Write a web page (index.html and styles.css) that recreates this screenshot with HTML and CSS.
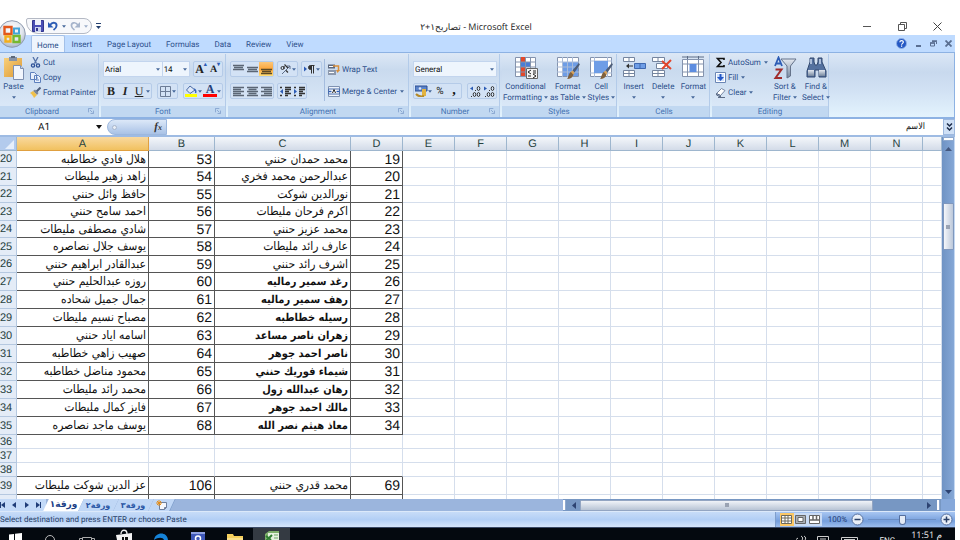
FILE: index.html
```html
<!DOCTYPE html>
<html lang="en">
<head>
<meta charset="utf-8">
<title>Microsoft Excel</title>
<link rel="stylesheet" href="styles.css">
</head>
<body>
<svg class="defs" aria-hidden="true">
  <defs>
    <linearGradient id="steel" x1="0" y1="0" x2="0" y2="1"><stop offset="0" stop-color="#e4e9f1"/><stop offset="1" stop-color="#75879f"/></linearGradient>
    <linearGradient id="gold" x1="0" y1="0" x2="1" y2="1"><stop offset="0" stop-color="#f8cf7a"/><stop offset="1" stop-color="#dd9a35"/></linearGradient>
    <radialGradient id="orb" cx=".5" cy=".35" r=".65"><stop offset="0" stop-color="#ffffff"/><stop offset=".6" stop-color="#e3e7ee"/><stop offset="1" stop-color="#a9b4c6"/></radialGradient>
  </defs>
  <symbol id="caret" viewBox="0 0 5 3"><path d="M0 0h5L2.500 3z" fill="#47689b"/></symbol>
  <symbol id="launch" viewBox="0 0 7 7"><path d="M.5 5V.5H5" fill="none" stroke="#7f9fcb"/><path d="M2.500 2.500 5 5M6.500 3v3.500H3" fill="none" stroke="#7f9fcb"/></symbol>
  <symbol id="al" viewBox="0 0 11 11"><path d="M0 1.500h11M0 3.500h8M0 5.500h11M0 7.500h8M0 9.500h11" stroke="#5b6675" stroke-width="1.300"/></symbol>
  <symbol id="ac" viewBox="0 0 11 11"><path d="M0 1.500h11M1.500 3.500h8M0 5.500h11M1.500 7.500h8M0 9.500h11" stroke="#5b6675" stroke-width="1.300"/></symbol>
  <symbol id="ar" viewBox="0 0 11 11"><path d="M0 1.500h11M3 3.500h8M0 5.500h11M3 7.500h8M0 9.500h11" stroke="#5b6675" stroke-width="1.300"/></symbol>
  <symbol id="vt" viewBox="0 0 11 11"><path d="M0 1.500h11M1 3.500h9M0 5.500h11" stroke="#5b6675" stroke-width="1.500"/></symbol>
  <symbol id="vm" viewBox="0 0 11 11"><path d="M0 3.500h11M1 5.500h9M0 7.500h11" stroke="#5b6675" stroke-width="1.500"/></symbol>
  <symbol id="vb" viewBox="0 0 11 11"><path d="M0 5.500h11M1 7.500h9M0 9.500h11" stroke="#5c4a26" stroke-width="1.500"/></symbol>
  <symbol id="brush" viewBox="0 0 12 15"><path d="M11 0 12 1.500 7 9 5 7z" fill="#4d5d78"/><path d="M5 7l2 2-1 2-3-2z" fill="#d9a35a"/><path d="M3.500 8.500 6 11c-1 3-3 4-6 4 1.500-1.500 1-4.500 3.500-6.500z" fill="#80613d"/></symbol>
</svg>

<div class="app">
  <header class="titlebar">
    <button class="orb" aria-label="Office Button">
      <svg viewBox="0 0 28 28" width="28" height="28"><circle cx="14" cy="14" r="13.300" fill="url(#orb)" stroke="#8f9bb0"/><g fill="none" stroke-width="2.400"><path d="M6.500 7h7v7h-7z" stroke="#e3571b"/><path d="M16 8.500h5v5h-5z" stroke="#43a4d8" stroke-width="2"/><path d="M7.500 16.500h5v5h-5z" stroke="#f3ae1c"/><path d="M15.500 16h6v6h-6z" stroke="#76b82f"/></g></svg>
    </button>
    <div class="qat">
      <button aria-label="Save"><svg viewBox="0 0 12 12" width="12" height="12"><path d="M.5.5h11v11h-11z" fill="#4b4fb5" stroke="#34388e"/><path d="M3 0h6v5H3z" fill="#eef1fb"/><path d="M3 7h6v5H3z" fill="#cdd5ef"/><path d="M4 8h2v3H4z" fill="#34388e"/></svg></button>
      <button aria-label="Undo"><svg viewBox="0 0 10 10" width="10" height="10"><path d="M2 4C5 0 9 2 8.500 5 8.300 7 7 8 5.500 9" fill="none" stroke="#2d5cb5" stroke-width="1.900"/><path d="M0 1v5.500h5.500z" fill="#2d5cb5"/></svg></button>
      <svg class="caret" width="4" height="3"><use href="#caret"/></svg>
      <button aria-label="Redo"><svg viewBox="0 0 10 10" width="10" height="10"><path d="M8 4C5 0 1 2 1.500 5 1.700 7 3 8 4.500 9" fill="none" stroke="#a6b4cb" stroke-width="1.700"/><path d="M10 1v5.500H4.500z" fill="#a6b4cb"/></svg></button>
      <svg class="caret dim" width="4" height="3"><use href="#caret"/></svg>
    </div>
    <button class="qat-more" aria-label="Customize"><svg viewBox="0 0 5 6" width="5" height="6"><path d="M0 .5h5" stroke="#24406f"/><path d="M0 3h5L2.500 6z" fill="#24406f"/></svg></button>
    <h1><bdi dir="rtl">تصاريح١+٢</bdi> - Microsoft Excel</h1>
    <div class="winbtns">
      <button aria-label="Minimize"><svg viewBox="0 0 9 9" width="9" height="9"><path d="M0 4.500h8" stroke="#555"/></svg></button>
      <button aria-label="Restore"><svg viewBox="0 0 9 9" width="9" height="9"><path d="M.5 2.500h6v6h-6zM2.500 2V.5h6v6H7" fill="none" stroke="#555"/></svg></button>
      <button aria-label="Close"><svg viewBox="0 0 9 9" width="9" height="9"><path d="M.5.5l8 8M8.500.5l-8 8" stroke="#444"/></svg></button>
    </div>
  </header>

  <nav class="tabs">
    <a class="on" href="#">Home</a><a href="#">Insert</a><a href="#">Page Layout</a><a href="#">Formulas</a><a href="#">Data</a><a href="#">Review</a><a href="#">View</a>
    <div class="docbtns">
      <button aria-label="Help"><svg viewBox="0 0 11 11" width="11" height="11"><circle cx="5.500" cy="5.500" r="5" fill="#2458c4" stroke="#8fb0e6"/><path d="M3.800 4.200c.2-2 3.600-2 3.500 0 0 1.200-1.700 1.200-1.700 2.600M5.600 7.600v1.200" fill="none" stroke="#fff" stroke-width="1.200"/></svg></button>
      <button aria-label="Minimize workbook"><svg viewBox="0 0 7 7" width="7" height="7"><path d="M1 6h5" stroke="#5a6f92" stroke-width="2"/></svg></button>
      <button aria-label="Restore workbook"><svg viewBox="0 0 7 7" width="7" height="7"><path d="M.5 3h4v3h-4zM2 1.500h4.500V4" fill="none" stroke="#5a6f92"/><path d="M0 3h5M2 1h5" stroke="#5a6f92" stroke-width="1.500"/></svg></button>
      <button aria-label="Close workbook"><svg viewBox="0 0 7 7" width="7" height="7"><path d="M.5.5l6 6M6.500.5l-6 6" stroke="#5a6f92" stroke-width="1.800"/></svg></button>
    </div>
  </nav>

  <section class="ribbon">
    <fieldset class="group g-clip">
      <div class="body">
        <button class="big paste"><svg viewBox="0 0 20 24" width="20" height="24"><path d="M0 2h18v19H0z" fill="url(#gold)"/><path d="M5 1h8v4H5z" fill="#8793a6"/><path d="M7 0h4v2H7z" fill="#5d6879"/><path d="M9.500 9.500h7l3 3v11h-10z" fill="#f2f6fd" stroke="#7d8fb0"/><path d="M16.500 9.500v3h3" fill="#c5d3ea" stroke="#7d8fb0"/></svg><span>Paste<br><svg class="caret" width="4" height="3"><use href="#caret"/></svg></span></button>
        <div class="stack">
          <button><svg viewBox="0 0 11 11" width="11" height="11"><path d="M3 0l3.500 6.500M8 0L4.500 6.500" stroke="#5472a8" stroke-width="1.300"/><circle cx="3" cy="8.500" r="1.600" fill="none" stroke="#2b4f96" stroke-width="1.300"/><circle cx="8" cy="8.500" r="1.600" fill="none" stroke="#2b4f96" stroke-width="1.300"/></svg>Cut</button>
          <button><svg viewBox="0 0 11 11" width="11" height="11"><path d="M.5.500h4l2 2v5h-6zM4.500 3.500h4l2 2v5h-6z" fill="#e8f0fc" stroke="#5d80bd"/><path d="M6 6h2M6 8h3" stroke="#5d80bd"/></svg>Copy</button>
          <button><svg viewBox="0 0 11 11" width="11" height="11"><path d="M10.500.5 6 5" stroke="#4e5f7d" stroke-width="2"/><path d="M5 2.500 8.500 6 7 8 3 4z" fill="#7b8699"/><path d="M3 4l4 4-3 3C3 8.500 1.500 7 0 6z" fill="#f0c04a"/></svg>Format Painter</button>
        </div>
      </div>
      <legend>Clipboard</legend><svg class="launch" width="6" height="6"><use href="#launch"/></svg>
    </fieldset>

    <fieldset class="group g-font">
      <div class="body rows">
        <div class="row">
          <label class="combo c-font"><select aria-label="Font"><option>Arial</option></select><svg class="caret" width="4" height="3"><use href="#caret"/></svg></label>
          <label class="combo c-size"><select aria-label="Font size"><option>14</option></select><svg class="caret" width="4" height="3"><use href="#caret"/></svg></label>
          <div class="set push"><button class="serif grow" aria-label="Grow font">A<sup>▴</sup></button><button class="serif shrink" aria-label="Shrink font">A<sup>▾</sup></button></div>
        </div>
        <div class="row">
          <div class="set"><button class="serif">B</button><button class="serif i">I</button><button class="serif u">U</button><svg class="caret" width="4" height="3"><use href="#caret"/></svg></div>
          <div class="set"><button aria-label="Borders"><svg viewBox="0 0 11 11" width="11" height="11"><path d="M.5.5h10v10H.5zM5.500 0v11M0 5.500h11" fill="none" stroke="#6c7c96"/></svg></button><svg class="caret" width="4" height="3"><use href="#caret"/></svg></div>
          <div class="set"><button aria-label="Fill color"><svg viewBox="0 0 12 12" width="12" height="12"><path d="M5 1l5 4-5 3.500L1.500 5z" fill="#dfe9f8" stroke="#4a6ba6"/><path d="M9 4c2 1 2 3 1.500 4" stroke="#3b68b8" stroke-width="1.500" fill="none"/><path d="M0 9h12v3H0z" fill="#ff0"/></svg></button><svg class="caret" width="4" height="3"><use href="#caret"/></svg><button class="serif ink" aria-label="Font color">A</button><svg class="caret" width="4" height="3"><use href="#caret"/></svg></div>
        </div>
      </div>
      <legend>Font</legend><svg class="launch" width="6" height="6"><use href="#launch"/></svg>
    </fieldset>

    <fieldset class="group g-align">
      <div class="body">
        <div class="rows">
          <div class="row">
            <div class="set"><button aria-label="Top align"><svg width="11" height="11"><use href="#vt"/></svg></button><button aria-label="Middle align"><svg width="11" height="11"><use href="#vm"/></svg></button><button class="lit" aria-label="Bottom align"><svg width="11" height="11"><use href="#vb"/></svg></button></div>
            <div class="set"><button aria-label="Orientation"><svg viewBox="0 0 11 11" width="11" height="11"><path d="M2 10l8-8M10 5V2H7" fill="none" stroke="#5e6f8a"/><circle cx="2.500" cy="4" r="1.500" fill="none" stroke="#333"/><path d="M4 2v3M4.500.500 8 4M6 6.500l2 2" stroke="#333" stroke-width="1.200"/></svg></button><svg class="caret" width="4" height="3"><use href="#caret"/></svg></div>
            <div class="set"><button aria-label="Text direction"><svg viewBox="0 0 11 11" width="11" height="11"><path d="M0 2.500v5L3 5z" fill="#2d5cb5"/><path d="M10.500 1.500H6.500a2 2 0 0 0 0 4V2M7.500 1.500v8M9.500 1.500v8" fill="#333" stroke="#333"/></svg></button><svg class="caret" width="4" height="3"><use href="#caret"/></svg></div>
          </div>
          <div class="row">
            <div class="set"><button aria-label="Align left"><svg width="11" height="11"><use href="#al"/></svg></button><button aria-label="Center"><svg width="11" height="11"><use href="#ac"/></svg></button><button aria-label="Align right"><svg width="11" height="11"><use href="#ar"/></svg></button></div>
            <div class="set"><button aria-label="Decrease indent"><svg viewBox="0 0 11 11" width="11" height="11"><path d="M0 1.500h2M5 1.500h6M5 3.500h6M5 5.500h4M5 7.500h6M0 9.500h2M5 9.500h3" stroke="#333" stroke-width="1.300"/><path d="M0 5.500 3 3v5z" fill="#2d5cb5"/></svg></button><button aria-label="Increase indent"><svg viewBox="0 0 11 11" width="11" height="11"><path d="M0 1.500h2M5 1.500h6M5 3.500h6M5 5.500h4M5 7.500h6M0 9.500h2M5 9.500h3" stroke="#333" stroke-width="1.300"/><path d="M3 5.500 0 3v5z" fill="#2d5cb5"/></svg></button></div>
          </div>
        </div>
        <div class="wraps">
          <button><svg viewBox="0 0 12 11" width="12" height="11"><path d="M0 .5h7v4H0z" fill="#5c6980"/><path d="M0 6h8v5H0z" fill="#8d99ad"/><path d="M5 2h5.500v5" fill="none" stroke="#d98f3a" stroke-width="1.500"/><path d="M1 2.500h4M1 8.500h5" stroke="#fff"/><path d="M8 6h4L9.500 9z" fill="#d98f3a"/></svg>Wrap Text</button>
          <button><svg viewBox="0 0 12 11" width="12" height="11"><path d="M.5.5h11v10H.5z" fill="#eef3fb" stroke="#7f92b2"/><path d="M.5 3h11v5H.5z" fill="#fff" stroke="#4b6fae"/><path d="M1 5.500h2.500M8.500 5.500H11" stroke="#2d5cb5" stroke-width="1.500"/><path d="M4.500 7 6 3.500 7.500 7" fill="none" stroke="#222"/></svg>Merge &amp; Center<svg class="caret" width="4" height="3"><use href="#caret"/></svg></button>
        </div>
      </div>
      <legend>Alignment</legend><svg class="launch" width="6" height="6"><use href="#launch"/></svg>
    </fieldset>

    <fieldset class="group g-num">
      <div class="body rows">
        <div class="row"><label class="combo c-num"><select aria-label="Number format"><option>General</option></select><svg class="caret" width="4" height="3"><use href="#caret"/></svg></label></div>
        <div class="row">
          <div class="set"><button aria-label="Accounting format"><svg viewBox="0 0 13 12" width="13" height="12"><path d="M0 1h12v5H0z" fill="#5b83c9" stroke="#2c4f92"/><circle cx="5" cy="3.500" r="1.300" fill="#dfe9fa"/><path d="M7 4h4v7H7z" fill="#e2b340"/><path d="M1 9c2 2 5 3 8 2" stroke="#b48a2a" stroke-width="2" fill="none"/></svg></button><svg class="caret" width="4" height="3"><use href="#caret"/></svg><button class="pct">%</button><button class="comma">,</button></div>
          <div class="set dec"><button aria-label="Increase decimal"><svg viewBox="0 0 11 11" width="11" height="11"><path d="M0 2.500 3 .5v4z" fill="#2d5cb5"/><g fill="none" stroke="#333"><ellipse cx="8.500" cy="2.500" rx="1.300" ry="2"/><ellipse cx="4.500" cy="8.500" rx="1.300" ry="2"/><ellipse cx="8.500" cy="8.500" rx="1.300" ry="2"/><path d="M1 10.500h1M5 4.500h1"/></g></svg></button><button aria-label="Decrease decimal"><svg viewBox="0 0 11 11" width="11" height="11"><path d="M3 2.500 0 .5v4z" fill="#2d5cb5"/><g fill="none" stroke="#333"><ellipse cx="8.500" cy="2.500" rx="1.300" ry="2"/><ellipse cx="4.500" cy="8.500" rx="1.300" ry="2"/><ellipse cx="8.500" cy="8.500" rx="1.300" ry="2"/><path d="M1 10.500h1M5 4.500h1"/></g></svg></button></div>
        </div>
      </div>
      <legend>Number</legend><svg class="launch" width="6" height="6"><use href="#launch"/></svg>
    </fieldset>

    <fieldset class="group g-styles">
      <div class="body bigs">
        <button class="big"><svg viewBox="0 0 24 24" width="24" height="24"><path d="M1.500 1.500h20v19h-20z" fill="#fff" stroke="#8493ad"/><path d="M6.500 1h5v5h-5zM6.500 11h5v5h-5z" fill="#e2492b"/><path d="M6.500 6h10v5h-10z" fill="#4a7ed6"/><path d="M6.500 16h5v4h-5z" fill="#e2492b"/><path d="M6.500 1v20M11.500 1v20M16.500 1v20M1 6h21M1 11h21M1 16h21" stroke="#8493ad" fill="none"/><path d="M12.500 12.500h11v10h-11z" fill="#f4f4f4" stroke="#666"/><path d="M17 14l-3 2 3 2M19 15h3M19 17h3M14 20h3M19 18l3 2-3 2" fill="none" stroke="#222"/></svg><span>Conditional<br>Formatting <svg class="caret" width="4" height="3"><use href="#caret"/></svg></span></button>
        <button class="big"><svg viewBox="0 0 24 24" width="24" height="24"><path d="M1.500 1.500h21v19h-21z" fill="#fff" stroke="#8493ad"/><path d="M7 6h15v14H7z" fill="#6e9de6"/><path d="M6.500 1v20M11.500 1v20M16.500 1v20M1 6h22M1 11h22M1 16h22" stroke="#a9bbd8" fill="none"/><use href="#brush" x="11" y="7" width="13" height="16"/></svg><span>Format<br>as Table <svg class="caret" width="4" height="3"><use href="#caret"/></svg></span></button>
        <button class="big"><svg viewBox="0 0 24 24" width="24" height="24"><path d="M1.500 1.500h21v19h-21z" fill="#fff" stroke="#8493ad"/><path d="M5.500 1v20M18.500 1v20M1 5h22M1 17h22" stroke="#a9bbd8" fill="none"/><path d="M5 5h14v12H5z" fill="#6e9de6"/><use href="#brush" x="11" y="7" width="13" height="16"/></svg><span>Cell<br>Styles <svg class="caret" width="4" height="3"><use href="#caret"/></svg></span></button>
      </div>
      <legend>Styles</legend>
    </fieldset>

    <fieldset class="group g-cells">
      <div class="body bigs">
        <button class="big"><svg viewBox="0 0 24 24" width="24" height="24"><path d="M1.500 1.500h11v4h-11zM1.500 14.500h11v6h-11zM7 1.500v4M7 14.500v6M1.500 17.500h11" fill="#fff" stroke="#75859f"/><path d="M12.500 7.500h11v5h-11z" fill="#6e9de6" stroke="#3f68b0"/><path d="M18 7.500v5" stroke="#3f68b0"/><path d="M11 10H5" stroke="#333"/><path d="M4 10l3-2.500v5z" fill="#333"/></svg><span>Insert<br><svg class="caret" width="4" height="3"><use href="#caret"/></svg></span></button>
        <button class="big"><svg viewBox="0 0 24 24" width="24" height="24"><path d="M1.500 1.500h12v4h-12zM5.500 7.500h11v5h-11zM1.500 14.500h12v6h-12zM7 1.500v4M7 14.500v6M1.500 17.500h12" fill="#fff" stroke="#75859f"/><path d="M11 5l9 8M20 4l-9 9" stroke="#e2452b" stroke-width="2"/></svg><span>Delete<br><svg class="caret" width="4" height="3"><use href="#caret"/></svg></span></button>
        <button class="big"><svg viewBox="0 0 24 24" width="24" height="24"><path d="M1.500 3.500h21v17h-21zM1.500 8h21M1.500 16h21M6.500 3.500v17M17.500 3.500v17" fill="#fff" stroke="#8493ad"/><path d="M8.500 8h7v8h-7z" fill="#5d8de0"/><path d="M1 1h22M6.500 0v3M17.500 0v3" stroke="#5c6c86"/></svg><span>Format<br><svg class="caret" width="4" height="3"><use href="#caret"/></svg></span></button>
      </div>
      <legend>Cells</legend>
    </fieldset>

    <fieldset class="group g-edit">
      <div class="body">
        <div class="stack">
          <button><svg viewBox="0 0 11 11" width="11" height="11"><path d="M9 3V1.500H2.500L6 5.500l-3.500 4H9V8" fill="none" stroke="#111" stroke-width="1.600"/></svg>AutoSum<svg class="caret" width="4" height="3"><use href="#caret"/></svg></button>
          <button><svg viewBox="0 0 11 11" width="11" height="11"><path d="M.5.5h10v10H.5z" fill="#fff" stroke="#6b86b5"/><path d="M2 2h7v7H2z" fill="#cfe0fb"/><path d="M4.500 2h2v3H9L5.500 9 2 5h2.500z" fill="#2558c6"/></svg>Fill<svg class="caret" width="4" height="3"><use href="#caret"/></svg></button>
          <button><svg viewBox="0 0 11 11" width="11" height="11"><path d="M6.500 1.500 10 3.500 5.500 8.500 1.500 6.500z" fill="#fff" stroke="#7787a3"/><path d="M1.500 6.500 5.500 8.500v1.500l-4-2zM3 10.500h7" fill="#a9b8d3" stroke="#5c6c86"/></svg>Clear<svg class="caret" width="4" height="3"><use href="#caret"/></svg></button>
        </div>
        <button class="big"><svg viewBox="0 0 24 24" width="24" height="24"><path d="M2 10 5.500 1.500 9 10M3.500 7.500h4" fill="none" stroke="#2d5cb5" stroke-width="1.800"/><path d="M2.500 13.500h6l-6 8.500H9" fill="none" stroke="#a02c2c" stroke-width="2"/><path d="M8 3h15l-5.500 7v10L14 22V10z" fill="url(#steel)" stroke="#65738a"/></svg><span>Sort &amp;<br>Filter <svg class="caret" width="4" height="3"><use href="#caret"/></svg></span></button>
        <button class="big"><svg viewBox="0 0 24 24" width="24" height="24"><path d="M6 2h4v4l1 3h2l1-3V2h4v4l4 9v6h-7v-7h-4v7H3v-6l3-9z" fill="#54719f" stroke="#32496f"/><path d="M4 14h6v6H4zM15 14h6v6h-6z" fill="url(#steel)"/><path d="M7 3v5M16 3v5" stroke="#c9d7ee" stroke-width="1.500"/></svg><span>Find &amp;<br>Select <svg class="caret" width="4" height="3"><use href="#caret"/></svg></span></button>
      </div>
      <legend>Editing</legend>
    </fieldset>
  </section>

  <section class="formula">
    <label class="namebox"><input aria-label="Name box" value="A1"><svg viewBox="0 0 6 4" width="6" height="4"><path d="M0 0h6L3 4z" fill="#111"/></svg></label>
    <div class="fx"><i class="dot"></i><button aria-label="Insert function"><i>f</i><small>x</small></button></div>
    <input class="fbox" aria-label="Formula" dir="rtl" value="الاسم">
    <button class="expand" aria-label="Expand formula bar"><svg viewBox="0 0 7 8" width="7" height="8"><path d="M1 .5 3.500 3 6 .5M1 4.500 3.500 7 6 4.500" fill="none" stroke="#1d2c4a" stroke-width="1.500"/></svg></button>
  </section>

  <main class="sheet">
    <div class="gridwrap">
      <table>
        <colgroup><col class="w-n"><col class="w-a"><col class="w-b"><col class="w-c"><col class="w-d"><col class="w-d" span="10"><col></colgroup>
        <thead><tr id="heads"></tr></thead>
        <tbody id="rows"></tbody>
      </table>
    </div>
    <div class="vscroll"><i class="split"></i><svg viewBox="0 0 7 4" width="7" height="4"><path d="M0 4h7L3.500 0z" fill="#44587f"/></svg><i class="thumb"></i><svg viewBox="0 0 7 4" width="7" height="4"><path d="M0 0h7L3.500 4z" fill="#2d4371"/></svg></div>
  </main>

  <div class="sheetbar">
    <div class="nav">
      <button aria-label="First sheet"><svg viewBox="0 0 5 6" width="5" height="6"><path d="M.5 0v6" stroke="#1f3d78"/><path d="M5 0v6L1 3z" fill="#1f3d78"/></svg></button>
      <button aria-label="Previous sheet"><svg viewBox="0 0 5 6" width="5" height="6"><path d="M4 0v6L0 3z" fill="#1f3d78"/></svg></button>
      <button aria-label="Next sheet"><svg viewBox="0 0 5 6" width="5" height="6"><path d="M1 0v6l4-3z" fill="#1f3d78"/></svg></button>
      <button aria-label="Last sheet"><svg viewBox="0 0 5 6" width="5" height="6"><path d="M4.500 0v6" stroke="#1f3d78"/><path d="M0 0v6l4-3z" fill="#1f3d78"/></svg></button>
    </div>
    <a class="stab on" href="#" dir="rtl"><span>ورقة١</span></a><a class="stab" href="#" dir="rtl"><span>ورقة٢</span></a><a class="stab" href="#" dir="rtl"><span>ورقة٣</span></a>
    <button class="stab new" aria-label="Insert worksheet"><svg viewBox="0 0 12 10" width="12" height="10"><path d="M3.500 2.500h7v5l-2 2h-5z" fill="#f5f8fd" stroke="#6e7f9d"/><path d="M10.500 7.500h-2v2" fill="none" stroke="#6e7f9d"/><path d="M3 0v6M0 3h6M1 1l4 4M5 1 1 5" stroke="#e58f1c"/></svg></button>
    <div class="hscroll"><i class="split"></i><svg viewBox="0 0 4 7" width="4" height="7"><path d="M4 0v7L0 3.500z" fill="#2d4371"/></svg><i class="thumb"></i><svg viewBox="0 0 4 7" width="4" height="7"><path d="M0 0v7l4-3.500z" fill="#2d4371"/></svg><i class="split"></i></div>
    <i class="nook"></i>
  </div>

  <footer class="status">
    <span class="msg">Select destination and press ENTER or choose Paste</span>
    <div class="tools">
      <div class="views">
        <button class="lit" aria-label="Normal"><svg viewBox="0 0 11 9" width="11" height="9"><path d="M.5.5h10v8H.5zM4 .5v8M7 .5v8M.5 3h10M.5 6h10" fill="#fff" stroke="#6d6a5c"/></svg></button>
        <button aria-label="Page layout"><svg viewBox="0 0 11 9" width="11" height="9"><path d="M.5.5h10v8H.5z" fill="#aab0b8" stroke="#666"/><path d="M3 2.500h5v4H3z" fill="#fff" stroke="#666"/></svg></button>
        <button aria-label="Page break preview"><svg viewBox="0 0 11 9" width="11" height="9"><path d="M.5.5h10v8H.5z" fill="#fff" stroke="#666"/><path d="M1 5h3V1M7.500 1v4H10M4 5h3.500" fill="none" stroke="#666" stroke-width="1.500"/></svg></button>
      </div>
      <button class="pc">100%</button>
      <button aria-label="Zoom out"><svg viewBox="0 0 13 13" width="13" height="13"><circle cx="6.500" cy="6.500" r="5.500" fill="#e9eff8" stroke="#546f9f"/><path d="M3.500 6.500h6" stroke="#2b4068" stroke-width="1.500"/></svg></button>
      <input type="range" aria-label="Zoom" value="50">
      <button aria-label="Zoom in"><svg viewBox="0 0 13 13" width="13" height="13"><circle cx="6.500" cy="6.500" r="5.500" fill="#e9eff8" stroke="#546f9f"/><path d="M3.500 6.500h6M6.500 3.500v6" stroke="#2b4068" stroke-width="1.500"/></svg></button>
    </div>
  </footer>

  <div class="taskbar">
    <div class="apps">
      <button aria-label="Start"><svg viewBox="0 0 16 12" width="16" height="12"><path d="M1 6.500 6 6v6H1zM7 5.800 14 5v7H7z" fill="#fff"/></svg></button>
      <button aria-label="Search"><svg viewBox="0 0 16 12" width="16" height="12"><circle cx="8" cy="12" r="4.500" fill="none" stroke="#bbb"/></svg></button>
      <button aria-label="Task view"><svg viewBox="0 0 16 12" width="16" height="12"><path d="M3.500 12V9.500h9V12M.5 12V10.500H3M15.500 12V10.500H13" fill="none" stroke="#aaa"/></svg></button>
      <button aria-label="Store"><svg viewBox="0 0 16 12" width="16" height="12"><path d="M0 7l16-2v7H1z" fill="#f4f4f4"/><path d="M5 6c0-5 6-5 6 0" fill="none" stroke="#f4f4f4" stroke-width="1.300"/><path d="M6 9h2v3H6zM9 9h3v3H9z" fill="#111"/></svg></button>
      <button aria-label="Edge"><svg viewBox="0 0 16 12" width="16" height="12"><path d="M1 12C2 4 14 3 15 12h-4c-1-3-6-3-10 0z" fill="#1583d8"/></svg></button>
      <button aria-label="Media"><svg viewBox="0 0 16 12" width="16" height="12"><path d="M1 4h14v8H1z" fill="#3e57b8"/><path d="M1 4h14v2H1z" fill="#8ea0e0"/><circle cx="8" cy="10.500" r="2.500" fill="none" stroke="#fff" stroke-width="1.500"/></svg></button>
      <button aria-label="Files"><svg viewBox="0 0 16 12" width="16" height="12"><path d="M0 6h6l1 2h9v4H0z" fill="#f5cf5c"/><path d="M0 10h16v2H0z" fill="#fbe08a"/></svg></button>
      <button class="cur" aria-label="Excel"><svg viewBox="0 0 16 12" width="16" height="12"><path d="M1 6l4-3h10v9H1z" fill="#7fae6c"/><path d="M4 5h11v7H4z" fill="#e6f0e0"/><path d="M2 8l5 4M8 7l-6 6" stroke="#2f7d32" stroke-width="2"/><path d="M10 7h4M10 10h4" stroke="#6aa564"/></svg></button>
    </div>
    <div class="tray">
      <svg viewBox="0 0 100 12" width="100" height="12"><path d="M23 11.500 25 10M28 8c2 1 2 3 1 4M31 8c2 1 2 3 1 4M44.500 12V8.500h11V12M47 11h6M68.500 12V9.500h16V12M71 11.500h11" fill="none" stroke="#ccc"/></svg>
      <span class="lang">ENG</span>
      <span class="clock"><bdi>11:51</bdi> م</span>
    </div>
  </div>
</div>
<script src="script.js"></script>
</body>
</html>
```
FILE: styles.css
```css
* { box-sizing: border-box; }
body {
  margin: 0;
  background: #fff;
  font-family: Roboto, "Open Sans", "DejaVu Sans", sans-serif;
  font-size: 8px;
  line-height: 11px;
  color: #2c4f8c;
  text-rendering: geometricPrecision;
}
button, input, select { font: inherit; color: inherit; text-rendering: inherit; }
button { border: 0; padding: 0; background: none; display: inline-flex; align-items: center; justify-content: center; white-space: nowrap; }
svg { display: block; flex: none; }
a { color: inherit; text-decoration: none; }
.defs { position: absolute; width: 0; height: 0; }
.app { display: flex; flex-direction: column; height: 100vh; margin-right: 5px; overflow: hidden; }

/* Title bar */
.titlebar { position: relative; z-index: 2; display: flex; align-items: center; height: 35px; padding: 17px 13px 0 26px; flex: none; }
.orb { position: absolute; left: -2px; top: 20px; }
.qat { display: flex; align-items: center; gap: 4px; width: 66px; height: 16px; padding-left: 5px; border: 1px solid #b4b9c4; border-radius: 2px 8px 8px 12px; background: #f7f8fb; }
.dim { opacity: .5; }
.qat-more { margin-left: 4px; }
.titlebar h1 { flex: 1; margin: 0; padding-right: 12px; text-align: center; font-family: "Open Sans", "DejaVu Sans", sans-serif; font-size: 9px; font-weight: 400; color: #222; }
.winbtns { display: flex; gap: 26px; }

/* Ribbon tabs */
.tabs { display: flex; align-items: stretch; height: 17px; flex: none; padding: 0 3px 0 31px; background: #bfdbff; }
.tabs > a { display: flex; align-items: center; padding: 2px 8px 0 7px; }
.tabs > a.on { padding: 2px 5px 0; border: 1px solid #a3c0e8; border-bottom: 0; border-radius: 2px 2px 0 0; background: #eef5fe; }
.docbtns { display: flex; align-items: center; gap: 8px; margin-left: auto; }

/* Ribbon */
.ribbon { display: flex; gap: 2px; height: 67px; flex: none; padding: 1px 0 0; border: 1px solid #8db2e3; border-width: 1px 1px 2px 0; background: linear-gradient(#dbe7f6, #c8d9ee 30%, #d2e2f4 60%, #e3f3fd); }
.group { position: relative; display: flex; flex-direction: column; margin: 0; padding: 0; border: 0; border-right: 1px solid #b3cbe9; min-width: 0; background: linear-gradient(#dce7f5, #c9daee 25%, #d9e7f7 80%); }
.group legend { order: 2; float: left; width: 100%; height: 11px; padding: 0; background: #c1d8f1; color: #4573b3; text-align: center; }
.launch { position: absolute; right: 4px; bottom: 3px; }
.body { display: flex; height: 52px; width: 100%; }
.g-clip { width: 99px; }
.g-clip legend { padding-right: 14px; }
.g-font { width: 125px; }
.g-align { width: 181px; }
.g-num { width: 89px; }
.g-styles { width: 115px; }
.g-cells { width: 91px; }
.g-edit { width: 117px; }
.big { flex-direction: column; justify-content: flex-start; gap: 1px; padding-top: 2px; }
.big .caret { display: inline-block; vertical-align: middle; }
.bigs { justify-content: space-around; }
.paste { width: 27px; }
.stack { display: flex; flex-direction: column; align-items: flex-start; padding: 1px 0 0 3px; }
.stack button { height: 15px; gap: 2px; }
.g-edit .body { gap: 5px; }
.rows { display: flex; flex-direction: column; gap: 6px; padding: 7px 2px 0; }
.row { display: flex; gap: 3px; height: 16px; }
.g-font .row, .g-num .row { justify-content: space-between; }
.set { display: flex; align-items: center; border: 1px solid #b5cbe8; border-radius: 2px; background: #d3e2f5; }
.set button { width: 14px; height: 14px; }
.set .caret { margin-right: 1px; }
.push { margin-left: auto; }
.lit { background: linear-gradient(#fbc77a, #fda63a 50%, #ffe07a); }
.combo { display: flex; align-items: center; border: 1px solid #c3d5ee; background: #eef5fd; }
.combo select { flex: 1; min-width: 0; appearance: none; border: 0; padding: 0 1px; background: none; color: #111; }
.combo .caret { margin-right: 2px; }
.c-font { width: 61px; }
.c-size { width: 29px; margin-left: -4px; }
.c-num { width: 86px; }
.serif { font: bold 12px "Liberation Serif", serif; color: #222; }
.serif.i { font-style: italic; }
.serif.u { font-weight: 400; text-decoration: underline; }
.serif sup { font-size: 6px; line-height: 6px; color: #2d5cb5; align-self: flex-start; }
.serif.shrink { font-size: 10px; }
.set .ink { height: 12px; border-bottom: 3px solid #f00; line-height: 9px; color: #24407a; }
.wraps { display: flex; flex-direction: column; gap: 6px; height: 42px; margin-top: 5px; padding: 2px 0 0 3px; border-left: 1px solid #a4bcde; align-items: flex-start; }
.wraps button { height: 16px; gap: 2px; }
.wraps .caret, .stack .caret { margin-left: 1px; }
.pct { font-size: 10px; color: #222; }
.comma { font: bold 14px "Liberation Serif", serif; color: #111; }

/* Formula bar */
.formula { display: flex; height: 18px; flex: none; border-bottom: 2px solid #9ebbe3; background: #fff; color: #111; }
.namebox { display: flex; align-items: center; width: 107px; padding-right: 5px; }
.namebox input { flex: 1; min-width: 0; border: 0; padding: 0 8px 0 0; background: none; text-align: center; font-size: 10px; }
.fx { display: flex; align-items: center; justify-content: space-between; width: 60px; padding: 0 4px; border: 1px solid #9db8de; border-radius: 8px 0 0 8px; background: linear-gradient(#dce8f8, #a9c2e6); }
.dot { width: 5px; height: 5px; border-radius: 50%; background: #e9eef6; border: 1px solid #a8b6cc; }
.fx button { font: bold italic 11px "Liberation Serif", serif; color: #333; }
.fx small { font-size: 8px; }
.fbox { flex: 1; min-width: 0; border: 0; padding: 0 18px 0 0; font: 9px "DejaVu Sans Condensed", "DejaVu Sans", sans-serif; }
.expand { width: 12px; border: 1px solid #9db8de; background: #cfe0f6; }

/* Grid */
.sheet { display: flex; flex: 1; min-height: 0; overflow: hidden; }
.gridwrap { flex: 1; min-width: 0; overflow: hidden; }
table { width: 100%; table-layout: fixed; border-collapse: separate; border-spacing: 0; }
.w-n { width: 17px; }
.w-a { width: 132px; }
.w-b { width: 66px; }
.w-c { width: 136px; }
.w-d { width: 52px; }
th, td { padding: 0; overflow: hidden; white-space: nowrap; border: 0 solid #d5deec; border-width: 0 1px 1px 0; }
th { font: 11px/12px "Liberation Sans", sans-serif; color: #27413e; }
thead th { height: 14px; background: linear-gradient(#f4f7fb, #d3dbe8); border-color: #9eb6ce; }
thead th.sel { background: linear-gradient(#f9d99f, #f1c15f); border-color: #e0a040; }
tbody th { padding-right: 4px; text-align: right; background: #e4ecf7; border-color: #b5c8e0; }
.corner { background: #b3cbed; }
.corner svg { margin: 2px 2px 0 auto; }
td { font: 14px/13px "Liberation Sans", sans-serif; color: #111; text-align: right; }
td.box { border-color: #555; padding-right: 2px; }
td.name { font: 12px/13px "DejaVu Sans Condensed", "DejaVu Sans", sans-serif; padding-right: 2px; }
td.bold { font-size: 11px; font-weight: 700; }
td.under { border-bottom-color: #555; }
.h17 > * { height: 17px; }
.h18 > * { height: 18px; }
.h14 > * { height: 14px; }
.vscroll { display: flex; flex-direction: column; align-items: center; width: 13px; padding: 0 0 5px; border-right: 1px solid #c4d8f2; background: linear-gradient(90deg, #6f93c4, #85a7d6); }
.vscroll .split { width: 11px; height: 4px; margin-bottom: 6px; border: 1px solid #8ea9cf; background: #fff; }
.vscroll .thumb { width: 11px; height: 47px; margin: 52px 0 auto; border: 1px solid #7f97bd; border-radius: 1px; background: linear-gradient(#9aa3b3, #9aa3b3) center / 4px 4px no-repeat, linear-gradient(90deg, #f4f6fa, #bcc8da); }

/* Sheet tabs and horizontal scroll bar */
.sheetbar { display: flex; height: 13px; flex: none; border-bottom: 1px solid #dce9fa; background: #9bb5dd; }
.nav { display: flex; align-items: center; justify-content: space-between; width: 46px; padding: 0 5px 0 0; background: #c3daf8; }
.stab { display: flex; align-items: center; justify-content: center; width: 36px; margin-right: -1px; border-right: 1px solid #7f9ecb; background: #c0d7f6; transform: skewX(-25deg); font: bold 8px/11px "DejaVu Sans", sans-serif; color: #2b57a5; }
.stab > * { transform: skewX(25deg); }
.stab.on { background: #fff; color: #1c3f86; font-size: 9px; }
.stab.new { width: 22px; }
.hscroll { display: flex; align-items: center; width: calc(40% - 4px); margin-left: auto; gap: 4px; padding-right: 1px; background: #7797c3; }
.hscroll .split { width: 3px; height: 10px; background: #fff; border-right: 1px solid #8ea9cf; }
.hscroll .thumb { flex: 1; height: 11px; margin-right: 50px; border: 1px solid #93a5c2; border-radius: 1px; background: linear-gradient(#9aa3b3, #9aa3b3) center / 4px 4px no-repeat, linear-gradient(#f0f3f8, #b8c4d5); }
.hscroll .split + svg { margin-left: 2px; }
.hscroll svg + .split { margin-left: 2px; }
.nook { width: 14px; background: #86a8da; }

/* Status bar */
.status { display: flex; align-items: stretch; height: 15px; flex: none; background: linear-gradient(#c7dcf8, #b3cff5 50%, #d7e6fa); }
.msg { display: flex; align-items: center; flex: 1; color: #2a3f66; }
.tools { display: flex; align-items: center; gap: 4px; padding: 0 2px 0 4px; border-left: 1px solid #7f9ecb; background: linear-gradient(#a8c6f2, #769fdc 60%, #9dbeee); }
.views { display: flex; }
.views button { width: 14px; height: 13px; background: #c9dbf5; }
.views button.lit { background: #fcc866; }
.pc { margin-left: 2px; color: #1f3d78; }
input[type=range] { appearance: none; width: 68px; height: 12px; margin: 0; background: linear-gradient(#6d8fc4, #6d8fc4) center / 100% 1px no-repeat; }
input[type=range]::-webkit-slider-thumb { appearance: none; width: 7px; height: 10px; border: 1px solid #546f9f; border-radius: 1px 1px 4px 4px; background: #e4ebf6; }

/* Taskbar */
.taskbar { display: flex; justify-content: space-between; height: 13px; flex: none; border-top: 1px solid #3b4a66; background: #04090f; color: #eee; overflow: hidden; }
.apps { display: flex; }
.apps button { width: 37px; }
.apps button:first-child { width: 31px; }
.apps .cur { background: #343a42; }
.tray { display: flex; align-items: flex-start; gap: 6px; padding-right: 13px; }
.lang { padding-top: 7px; }
.clock { padding-left: 10px; font-family: "Open Sans", "DejaVu Sans", sans-serif; font-size: 9px; line-height: 14px; direction: ltr; }
```
FILE: script.js
```js
const names = [
  [20, 'هلال فادي خطاطبه', 53, 'محمد حمدان حنني', 19],
  [21, 'زاهد زهير مليطات', 54, 'عبدالرحمن محمد فخري', 20],
  [22, 'حافظ وائل حنني', 55, 'نورالدين شوكت', 21],
  [23, 'احمد سامح حنني', 56, 'اكرم فرحان مليطات', 22],
  [24, 'شادي مصطفى مليطات', 57, 'محمد عزيز حنني', 23],
  [25, 'يوسف جلال نصاصره', 58, 'عارف رائد مليطات', 24],
  [26, 'عبدالقادر ابراهيم حنني', 59, 'اشرف رائد حنني', 25],
  [27, 'روزه عبدالحليم حنني', 60, 'رغد سمير رماليه', 26],
  [28, 'جمال جميل شحاده', 61, 'رهف سمير رماليه', 27],
  [29, 'مصباح نسيم مليطات', 62, 'رسيله خطاطبه', 28],
  [30, 'اسامه اياد حنني', 63, 'زهران ناصر مساعد', 29],
  [31, 'صهيب زاهي خطاطبه', 64, 'ناصر احمد جوهر', 30],
  [32, 'محمود مناضل خطاطبه', 65, 'شيماء فوريك حنني', 31],
  [33, 'محمد رائد مليطات', 66, 'رهان عبدالله زول', 32],
  [34, 'فايز كمال مليطات', 67, 'مالك احمد جوهر', 33],
  [35, 'يوسف ماجد نصاصره', 68, 'معاذ هيثم نصر الله', 34],
  [36], [37], [38],
  [39, 'عز الدين شوكت مليطات', 106, 'محمد قدري حنني', 69],
  ['', '', '', '', '']
];

const corner = '<th class="corner"><svg viewBox="0 0 9 9" width="9" height="9"><path d="M9 0v9H0z" fill="#e6effb"/></svg></th>';
document.getElementById('heads').innerHTML = corner +
  [...'ABCDEFGHIJKLMN'].map(c => `<th class="${c === 'A' ? 'sel' : ''}">${c}</th>`).join('') + '<th></th>';

const shortRows = [20, 22, 24, 26];
document.getElementById('rows').innerHTML = names.map(([n, ...cells]) => {
  const blank = cells.length === 0;
  const height = blank ? 'h14' : shortRows.includes(n) ? 'h17' : 'h18';
  const bold = n >= 27 && n <= 35 ? ' bold' : '';
  const filled = blank
    ? `<td class="${n === 38 ? 'under' : ''}"></td>`.repeat(4)
    : cells.map((v, i) => i % 2 ? `<td class="box">${v}</td>`
        : `<td class="box name${i === 2 ? bold : ''}" dir="rtl">${v}</td>`).join('');
  return `<tr class="${height}"><th>${n}</th>${filled}${'<td></td>'.repeat(11)}</tr>`;
}).join('');
```
